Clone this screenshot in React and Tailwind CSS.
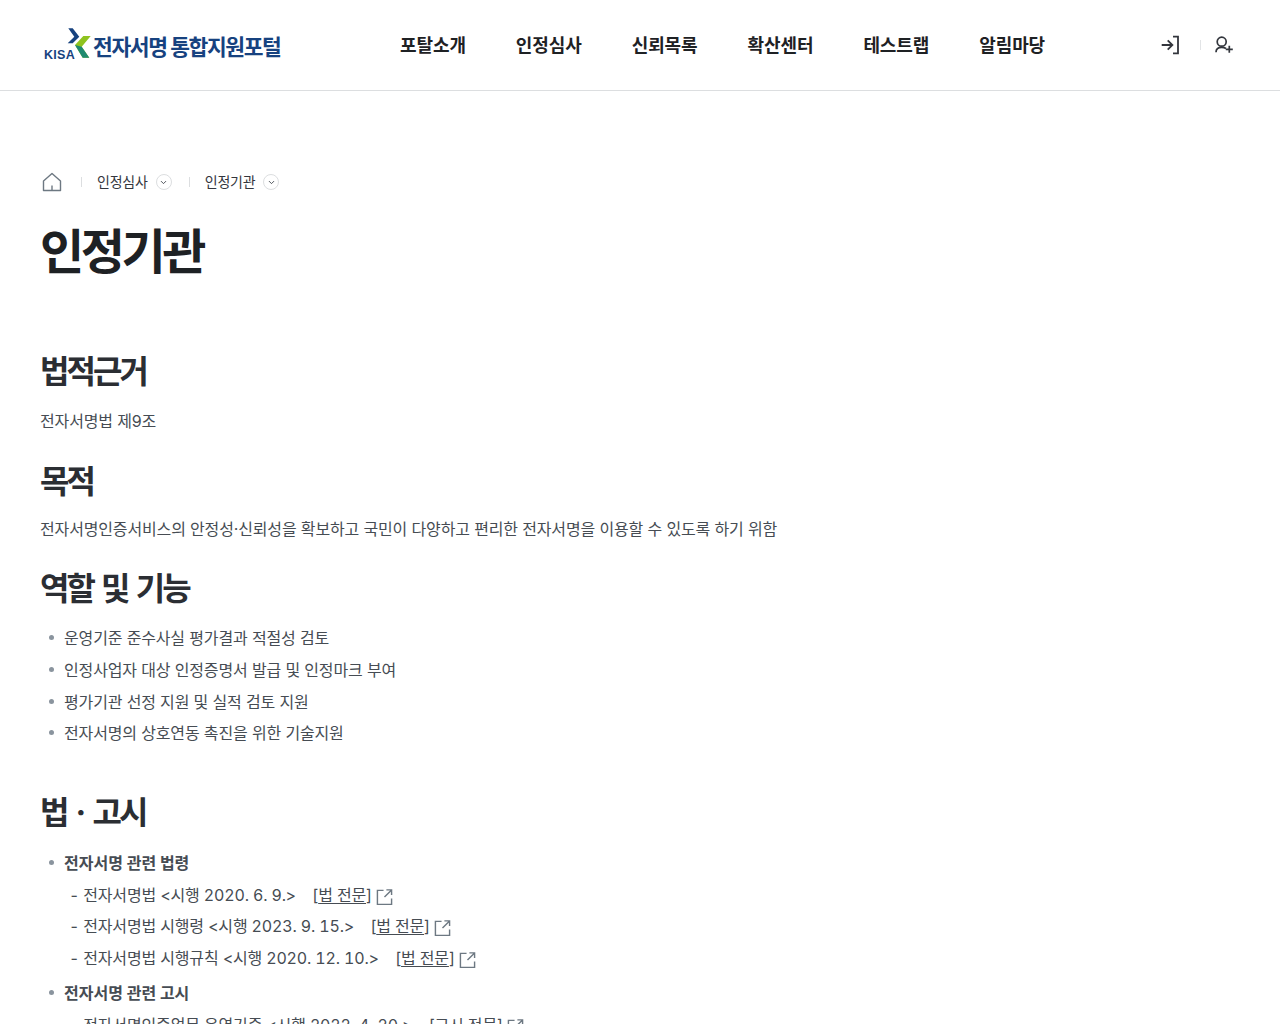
import React from 'react';
import { ChevronDown } from 'lucide-react';

const menus = ['포탈소개', '인정심사', '신뢰목록', '확산센터', '테스트랩', '알림마당'];

const roles = [
  '운영기준 준수사실 평가결과 적절성 검토',
  '인정사업자 대상 인정증명서 발급 및 인정마크 부여',
  '평가기관 선정 지원 및 실적 검토 지원',
  '전자서명의 상호연동 촉진을 위한 기술지원',
];

const laws = [
  { name: '전자서명법 <시행 2020. 6. 9.>', link: '법 전문' },
  { name: '전자서명법 시행령 <시행 2023. 9. 15.>', link: '법 전문' },
  { name: '전자서명법 시행규칙 <시행 2020. 12. 10.>', link: '법 전문' },
];

const notices = [{ name: '전자서명인증업무 운영기준 <시행 2022. 4. 20.>', link: '고시 전문' }];

const Logo = () => (
  <div className="flex items-end text-[#17427f] pt-[4px]">
    <div className="relative w-[50px] h-[32px]">
      <span className="absolute left-0 bottom-[1px] text-[12.5px] leading-[14px] font-semibold tracking-[0.3px] font-['Liberation_Sans',sans-serif]">
        KISA
      </span>
      <svg viewBox="0 0 50 32" className="absolute left-0 -top-[5px] w-[50px] h-[32px]">
        <path d="M24.3 2.3h4.4l6.6 8.4-6.6 6.6h-5l6.6-6.6z" fill="#17427f" />
        <path d="M46.7 10h-7.4L31 19l7.7 12.7h6.6L37.7 20.7z" fill="#8fc31f" />
        <path d="M31 19l7.7 12.7h6.6L37.7 20.7z" fill="#1f8a70" />
      </svg>
    </div>
    <span className="-ml-[1px] text-[21.5px] leading-[32px] font-bold tracking-[-1.4px] whitespace-nowrap">
      전자서명 통합지원포털
    </span>
  </div>
);

const Header = () => (
  <header className="h-[91px] border-b border-[#dcdee0] flex items-center pl-[44px] pr-[45px]">
    <div className="w-[356px] shrink-0">
      <Logo />
    </div>
    <nav className="flex gap-[50px] text-[18px] font-bold text-[#1e2124] tracking-[-0.1px] leading-[26px] pt-[2px]">
      {menus.map((m) => (
        <a key={m} className="whitespace-nowrap">{m}</a>
      ))}
    </nav>
    <div className="ml-auto flex items-center">
      <svg viewBox="0 0 22 22" fill="none" stroke="#33363d" strokeWidth="1.8" className="w-[22px] h-[22px]">
        <path d="M2.7 11H13M8.7 6.3l4.7 4.7-4.7 4.7" />
        <path d="M14 2.7h5v16.6h-5" />
      </svg>
      <span className="w-px h-[10px] bg-[#e2e4e6] ml-[19px] mr-[12px]" />
      <svg viewBox="0 0 22 22" fill="none" stroke="#33363d" strokeWidth="1.7" className="w-[22px] h-[22px]">
        <circle cx="8.7" cy="7.7" r="4.5" />
        <path d="M3 18.3c0-3.3 2.5-5 5.7-5 1.8 0 3.3.5 4.3 1.2" />
        <path d="M16.3 11.8v7M12.8 15.3h7" />
      </svg>
    </div>
  </header>
);

const Crumb = ({ label }) => (
  <>
    <span className="w-px h-[10px] bg-[#dcdee0] ml-[16px] mr-[15px]" />
    <span className="text-[14px] leading-[20px] text-[#33363d] tracking-[-0.2px]">{label}</span>
    <span className="ml-[8px] w-[16px] h-[16px] rounded-full border border-[#dcdee0] flex items-center justify-center">
      <ChevronDown size={9} strokeWidth={2.5} className="text-[#464c53]" />
    </span>
  </>
);

const H2 = ({ children, className = '' }) => (
  <h2 className={`text-[32px] leading-[42px] font-bold text-[#2b2e33] tracking-[-2.95px] [word-spacing:4.5px] ${className}`}>
    {children}
  </h2>
);

const Bullet = ({ children, bold }) => (
  <li className={`relative pl-[24px] h-[31.75px] leading-[32px] whitespace-nowrap ${bold ? 'font-bold' : ''}`}>
    <span className="absolute left-[9px] top-[13px] w-[5px] h-[5px] rounded-full bg-[#8a949e]" />
    {children}
  </li>
);

const LinkIcon = () => (
  <svg viewBox="0 0 18 18" fill="none" stroke="#6d7882" strokeWidth="1.5" className="w-[17px] h-[17px] ml-[4px] mt-[3px]">
    <path d="M8 2.5H1.5v15h15V11" />
    <path d="M11 2h5.5v5.5M16.5 2L9 9.5" />
  </svg>
);

const LawRow = ({ name, link }) => (
  <li className="flex items-center h-[31.75px] pl-[29px] whitespace-nowrap tracking-[-0.15px] tabular-nums">
    <span className="mr-[4px]">-</span>
    <span>{name}</span>
    <span className="ml-[16px]">[<a className="underline underline-offset-2">{link}</a>]</span>
    <LinkIcon />
  </li>
);

export default function App() {
  return (
    <div className="h-[1024px] overflow-hidden bg-white font-['Inter','Noto_Sans_CJK_KR',sans-serif]">
      <Header />
      <main className="pl-[40px] pt-[79px] text-[16px] text-[#464c53]">
        <div className="flex items-center h-[24px]">
          <svg viewBox="0 0 20 20" fill="none" stroke="#6d7882" strokeWidth="1.4" className="w-[20px] h-[20px] ml-[2px]">
            <path d="M1.5 9L10 1.5 18.5 9v9.5h-17z" strokeLinejoin="round" />
            <path d="M10 18.5v-5" />
          </svg>
          <div className="flex items-center ml-[3px]">
            <Crumb label="인정심사" />
          </div>
          <div className="flex items-center ml-[1px]">
            <Crumb label="인정기관" />
          </div>
        </div>
        <h1 className="mt-[26px] text-[48px] leading-[64px] font-bold text-[#1e2124] tracking-[-3.4px]">인정기관</h1>

        <H2 className="mt-[67px]">법적근거</H2>
        <p className="mt-[14px] leading-[28px] tracking-[-0.15px]">전자서명법 제9조</p>

        <H2 className="mt-[26px]">목적</H2>
        <p className="mt-[12px] leading-[28px] tracking-[-0.15px]">
          전자서명인증서비스의 안정성·신뢰성을 확보하고 국민이 다양하고 편리한 전자서명을 이용할 수 있도록 하기 위함
        </p>

        <H2 className="mt-[25px]">
          <span className="[word-spacing:3.5px]">역할 및 기능</span>
        </H2>
        <ul className="mt-[12px] tracking-[-0.15px]">
          {roles.map((r) => (
            <Bullet key={r}>{r}</Bullet>
          ))}
        </ul>

        <H2 className="mt-[43px]">법 · 고시</H2>
        <ul className="mt-[13px]">
          <Bullet bold>전자서명 관련 법령</Bullet>
          {laws.map((l) => (
            <LawRow key={l.name} {...l} />
          ))}
          <li className="h-[3px]" />
          <Bullet bold>전자서명 관련 고시</Bullet>
          {notices.map((l) => (
            <LawRow key={l.name} {...l} />
          ))}
        </ul>
      </main>
    </div>
  );
}
